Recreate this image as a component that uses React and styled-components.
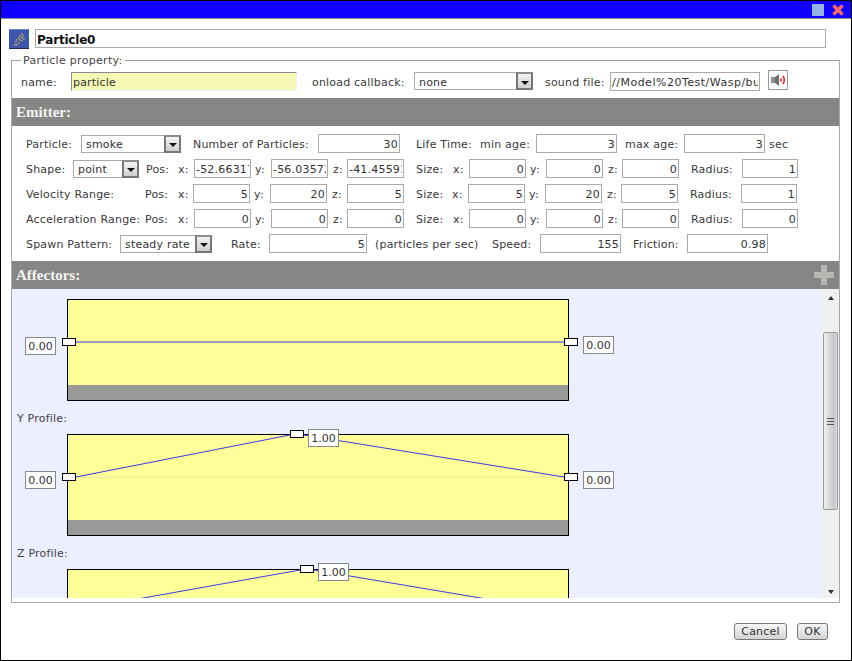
import React from 'react';
import styled, { createGlobalStyle } from 'styled-components';

const GlobalStyle = createGlobalStyle`
  html, body { margin: 0; padding: 0; background: #fff; }
  body { font-family: "DejaVu Sans", Verdana, sans-serif; font-size: 11px; color: #333; }
`;

const Dialog = styled.div`
  box-sizing: border-box;
  width: 852px;
  height: 661px;
  border: 1px solid #000;
  background: #fff;
  display: flex;
  flex-direction: column;
  overflow: hidden;
`;

const TitleBar = styled.div`
  height: 17px;
  flex: none;
  background: #0f00ff;
  border-bottom: 1px solid #8a8a9a;
  display: flex;
  align-items: center;
  justify-content: flex-end;
  gap: 8px;
  padding-right: 7px;
`;

const MaxButton = styled.div`
  width: 12px;
  height: 12px;
  background: #93b4ea;
`;

const TitleRow = styled.div`
  display: flex;
  align-items: center;
  gap: 6px;
  padding: 9px 0 0 8px;
  height: 21px;
`;

const TitleInput = styled.input`
  box-sizing: border-box;
  width: 791px;
  height: 19px;
  border: 1px solid #aaa;
  padding: 2px 1px 0;
  outline: none;
  font: bold 12px "DejaVu Sans", Verdana, sans-serif;
  letter-spacing: -0.2px;
  color: #111;
  background: #fff;
`;

const Fieldset = styled.fieldset`
  box-sizing: border-box;
  width: 829px;
  height: 548px;
  margin: 6px 0 0 10px;
  padding: 0;
  border: 1px solid #a8a8a8;
  border-top-color: #a0a0a0;
  display: flex;
  flex-direction: column;
  min-width: 0;
`;

const Legend = styled.legend`
  margin-left: 9px;
  padding: 0 2px;
  font-size: 11px;
  line-height: 11px;
  letter-spacing: 0.3px;
  color: #444;
`;

const NameRow = styled.div`
  display: flex;
  align-items: center;
  height: 20px;
  padding: 5px 0 7px 9px;
`;

const FieldRows = styled.div`
  display: flex;
  flex-direction: column;
  gap: 6px;
  padding: 8px 0 8px 14px;
`;

const Row = styled.div`
  display: flex;
  align-items: center;
  height: 19px;
`;

const Label = styled.span`
  box-sizing: border-box;
  flex: none;
  width: ${p => p.$w}px;
  padding: 2px 0 0 ${p => p.$pl || 0}px;
  white-space: nowrap;
  font-size: 11px;
  letter-spacing: 0.2px;
  color: #3a3a3a;
`;

const NameInput = styled.input`
  box-sizing: border-box;
  flex: none;
  width: 226px;
  height: 19px;
  padding: 2px 1px 0;
  outline: none;
  border: 1px solid;
  border-color: #8c8c8c #f0f0f0 #f0f0f0 #8c8c8c;
  background: #f5f9b5;
  font: 11px "DejaVu Sans", Verdana, sans-serif;
  letter-spacing: 0.2px;
  color: #333;
`;

const NumberInput = styled.input`
  box-sizing: border-box;
  flex: none;
  width: ${p => p.$w}px;
  height: 19px;
  padding: 2px 1px 0;
  outline: none;
  border: 1px solid #aaa;
  background: #fff;
  text-align: right;
  font: 11px "DejaVu Sans", Verdana, sans-serif;
  letter-spacing: 0.2px;
  color: #333;
`;

const SoundInput = styled(NumberInput)`
  text-align: left;
  letter-spacing: 0.5px;
`;

const Select = styled.div`
  box-sizing: border-box;
  flex: none;
  width: ${p => p.$w}px;
  height: 18px;
  border: 1px solid #aaa;
  background: #fff;
  display: flex;
  align-items: center;
  justify-content: space-between;
  padding-left: 4px;
  font-size: 11px;
  letter-spacing: 0.2px;
  color: #333;
`;

const SelectText = styled.span`
  padding-top: 2px;
`;

const SelectArrow = styled.div`
  box-sizing: border-box;
  flex: none;
  width: 17px;
  height: 18px;
  margin-right: -1px;
  border: 2px solid #777;
  border-top-color: #8c8c8c;
  background: linear-gradient(#f4f4f4, #cfcfcf);
  display: flex;
  align-items: center;
  justify-content: center;
  padding-top: 3px;
  &::after {
    content: "";
    border-left: 4px solid transparent;
    border-right: 4px solid transparent;
    border-top: 4px solid #111;
  }
`;

const SoundButton = styled.div`
  box-sizing: border-box;
  flex: none;
  width: 20px;
  height: 20px;
  margin: -3px 0 0 8px;
  border: 1px solid #999;
  background: #fff;
  display: flex;
  align-items: center;
  justify-content: center;
`;

const SectionHead = styled.div`
  flex: none;
  position: relative;
  height: 28px;
  background: #868785;
  display: flex;
  align-items: center;
  padding-left: 4px;
  font: bold 15px "Liberation Serif", "DejaVu Serif", serif;
  color: #f4f4f0;
`;

const AddIcon = styled.svg`
  position: absolute;
  right: 5px;
  top: 4px;
`;

const Body = styled.div`
  flex: none;
  display: flex;
  height: 309px;
  background: #ebefff;
`;

const Curves = styled.div`
  flex: 1;
  overflow: hidden;
  padding: 10px 0 0 55px;
`;

const ProfileLabel = styled.div`
  height: 33px;
  line-height: 35px;
  margin-left: -50px;
  font-size: 11px;
  letter-spacing: 0.2px;
  color: #444;
`;

const Chart = styled.div`
  box-sizing: border-box;
  position: relative;
  width: 502px;
  height: 102px;
  border: 1px solid #000;
  background: linear-gradient(#ffff99 0 85px, #999997 85px);
`;

const ChartLines = styled.svg`
  position: absolute;
  left: -1px;
  top: -1px;
  overflow: visible;
`;

const Handle = styled.div`
  box-sizing: border-box;
  position: absolute;
  left: ${p => p.$x - 1}px;
  top: ${p => p.$y - 1}px;
  width: 14px;
  height: 8px;
  border: 1px solid #000;
  background: #fff;
`;

const ValueBox = styled.div`
  box-sizing: border-box;
  position: absolute;
  left: ${p => p.$x - 1}px;
  top: ${p => p.$y - 1}px;
  width: 31px;
  height: 18px;
  border: 1px solid #888;
  background: #fff;
  text-align: center;
  line-height: 18px;
  font-size: 11px;
  color: #333;
`;

const ScrollBar = styled.div`
  flex: none;
  box-sizing: border-box;
  width: 17px;
  background: #f0f1ef;
  display: flex;
  flex-direction: column;
  align-items: center;
  padding-top: 7px;
`;

const ScrollArrow = styled.div`
  flex: none;
  width: 0;
  height: 0;
  border-left: 3px solid transparent;
  border-right: 3px solid transparent;
  ${p => (p.$down ? 'border-top: 4px solid #333;' : 'border-bottom: 4px solid #333;')}
`;

const ScrollThumb = styled.div`
  box-sizing: border-box;
  flex: none;
  width: 15px;
  height: 178px;
  margin: 32px 0 80px;
  border: 1px solid #999;
  border-radius: 2px;
  background: linear-gradient(90deg, #f0f0f0, #dcdcdc 35%, #c6c4cc 85%, #e8e8e8);
  display: flex;
  align-items: center;
  justify-content: center;
  &::after {
    content: "";
    width: 7px;
    height: 5px;
    border-top: 1px solid #555;
    border-bottom: 1px solid #555;
    background: linear-gradient(#555, #555) center / 100% 1px no-repeat;
  }
`;

const Footer = styled.div`
  flex: 1;
  display: flex;
  justify-content: flex-end;
  gap: 10px;
  padding: 20px 23px 0 0;
`;

const Button = styled.button`
  box-sizing: border-box;
  width: ${p => p.$w}px;
  height: 17px;
  padding: 0;
  border: 1px solid #777;
  border-radius: 3px;
  background: linear-gradient(#f6f6f6, #d4d4d4);
  font: 11px "DejaVu Sans", Verdana, sans-serif;
  letter-spacing: 0.2px;
  color: #333;
`;

const ParticleIcon = () => (
  <svg width="20" height="20" viewBox="0 0 20 20">
    <rect width="20" height="20" fill="#3f55ad" />
    <rect x="0" y="0" width="20" height="1" fill="#6d7fd0" />
    <rect x="19" y="0" width="1" height="20" fill="#2d6a78" />
    <rect x="0" y="19" width="20" height="1" fill="#1d2a60" />
    {[[12, 4], [10, 6], [13, 6], [9, 8], [12, 8], [14, 9], [7, 10], [10, 10], [12, 11], [6, 12], [9, 13], [5, 15], [7, 15]].map(([x, y]) => (
      <rect key={`${x}-${y}`} x={x} y={y} width="1.6" height="1.6" fill="#a9a86a" />
    ))}
  </svg>
);

const SpeakerIcon = () => (
  <svg width="16" height="14" viewBox="0 0 16 14">
    <rect x="1" y="4" width="4" height="6" fill="#8a8f8a" />
    <path d="M5 4 L9 1 V13 L5 10 Z" fill="#6f746f" />
    <rect x="10" y="5.5" width="2" height="3" fill="#e8484a" />
    <path d="M13 3 Q15.5 7 13 11" stroke="#e02a2e" strokeWidth="1.6" fill="none" />
  </svg>
);

const CloseIcon = () => (
  <svg width="12" height="12" viewBox="0 0 12 12">
    <path d="M1.5 1.5 L10.5 10.5 M10.5 1.5 L1.5 10.5" stroke="#ff6a5c" strokeWidth="3.2" />
  </svg>
);

const PlusIcon = () => (
  <AddIcon width="20" height="20" viewBox="0 0 20 20">
    <path d="M7 0 H13 V7 H20 V13 H13 V20 H7 V13 H0 V7 H7 Z" fill="#b6b8b4" />
  </AddIcon>
);

const curves = [
  {
    id: 'x',
    lines: '9,43 497,43',
    handles: [[-5, 39], [497, 39]],
    values: [[-42, 38, '0.00'], [516, 37, '0.00']],
  },
  {
    id: 'y',
    label: 'Y Profile:',
    flat: 43,
    lines: '9,43 223,1 237,1 497,43',
    handles: [[-5, 39], [223, -4], [497, 39]],
    values: [[-42, 37, '0.00'], [241, -5, '1.00'], [516, 37, '0.00']],
  },
  {
    id: 'z',
    label: 'Z Profile:',
    lines: '9,41 233,1 247,1 497,43',
    handles: [[233, -4]],
    values: [[251, -6, '1.00']],
  },
];

const ProfileChart = ({ curve }) => (
  <>
    {curve.label && <ProfileLabel>{curve.label}</ProfileLabel>}
    <Chart>
      <ChartLines width="502" height="102">
        {curve.flat && <line x1="1" x2="501" y1={curve.flat} y2={curve.flat} stroke="#e8e8a8" />}
        <polyline points={curve.lines} fill="none" stroke="#3a3ae8" />
      </ChartLines>
      {curve.handles.map(([x, y]) => <Handle key={x} $x={x} $y={y} />)}
      {curve.values.map(([x, y, text]) => (
        <ValueBox key={x} $x={x} $y={y}>{text}</ValueBox>
      ))}
    </Chart>
  </>
);

const Triple = ({ values, zw }) => (
  <>
    <NumberInput $w={57} value={values[0]} readOnly />
    <Label $w={20} $pl={4}>y:</Label>
    <NumberInput $w={57} value={values[1]} readOnly />
    <Label $w={zw} $pl={5}>z:</Label>
    <NumberInput $w={57} value={values[2]} readOnly />
  </>
);

const SizeFields = ({ sw, values, radius }) => (
  <>
    <Label $w={sw} $pl={12}>Size:</Label>
    <Label $w={16}>x:</Label>
    <Triple values={values} zw={19} />
    <Label $w={63} $pl={12}>Radius:</Label>
    <NumberInput $w={56} value={radius} readOnly />
  </>
);

const DropDown = ({ w, children }) => (
  <Select $w={w}>
    <SelectText>{children}</SelectText>
    <SelectArrow />
  </Select>
);

const App = () => (
  <Dialog>
    <GlobalStyle />
    <TitleBar>
      <MaxButton />
      <CloseIcon />
    </TitleBar>
    <TitleRow>
      <ParticleIcon />
      <TitleInput value="Particle0" readOnly />
    </TitleRow>
    <Fieldset>
      <Legend>Particle property:</Legend>
      <NameRow>
        <Label $w={50}>name:</Label>
        <NameInput value="particle" readOnly />
        <Label $w={117} $pl={15}>onload callback:</Label>
        <DropDown w={119}>none</DropDown>
        <Label $w={77} $pl={12}>sound file:</Label>
        <SoundInput $w={150} value="//Model%20Test/Wasp/bug.wav" readOnly />
        <SoundButton><SpeakerIcon /></SoundButton>
      </NameRow>
      <SectionHead>Emitter:</SectionHead>
      <FieldRows>
        <Row>
          <Label $w={55}>Particle:</Label>
          <DropDown w={100}>smoke</DropDown>
          <Label $w={137} $pl={12}>Number of Particles:</Label>
          <NumberInput $w={82} value="30" readOnly />
          <Label $w={80} $pl={16}>Life Time:</Label>
          <Label $w={56}>min age:</Label>
          <NumberInput $w={81} value="3" readOnly />
          <Label $w={67} $pl={8}>max age:</Label>
          <NumberInput $w={81} value="3" readOnly />
          <Label $w={30} $pl={4}>sec</Label>
        </Row>
        <Row>
          <Label $w={47}>Shape:</Label>
          <DropDown w={66}>point</DropDown>
          <Label $w={39} $pl={7}>Pos:</Label>
          <Label $w={16}>x:</Label>
          <Triple values={['-52.66317', '-56.03572', '-41.45591']} zw={19} />
          <SizeFields sw={49} values={[0, 0, 0]} radius={1} />
        </Row>
        <Row>
          <Label $w={119}>Velocity Range:</Label>
          <Label $w={33}>Pos:</Label>
          <Label $w={15}>x:</Label>
          <Triple values={[5, 20, 5]} zw={20} />
          <SizeFields sw={48} values={[5, 20, 5]} radius={1} />
        </Row>
        <Row>
          <Label $w={119}>Acceleration Range:</Label>
          <Label $w={33}>Pos:</Label>
          <Label $w={16}>x:</Label>
          <Triple values={[0, 0, 0]} zw={19} />
          <SizeFields sw={49} values={[0, 0, 0]} radius={0} />
        </Row>
        <Row>
          <Label $w={94}>Spawn Pattern:</Label>
          <DropDown w={92}>steady rate</DropDown>
          <Label $w={57} $pl={19}>Rate:</Label>
          <NumberInput $w={98} value="5" readOnly />
          <Label $w={125} $pl={8}>(particles per sec)</Label>
          <Label $w={48}>Speed:</Label>
          <NumberInput $w={81} value="155" readOnly />
          <Label $w={66} $pl={12}>Friction:</Label>
          <NumberInput $w={81} value="0.98" readOnly />
        </Row>
      </FieldRows>
      <SectionHead>
        Affectors:
        <PlusIcon />
      </SectionHead>
      <Body>
        <Curves>
          {curves.map(curve => <ProfileChart key={curve.id} curve={curve} />)}
        </Curves>
        <ScrollBar>
          <ScrollArrow />
          <ScrollThumb />
          <ScrollArrow $down />
        </ScrollBar>
      </Body>
    </Fieldset>
    <Footer>
      <Button $w={53}>Cancel</Button>
      <Button $w={31}>OK</Button>
    </Footer>
  </Dialog>
);

export default App;
